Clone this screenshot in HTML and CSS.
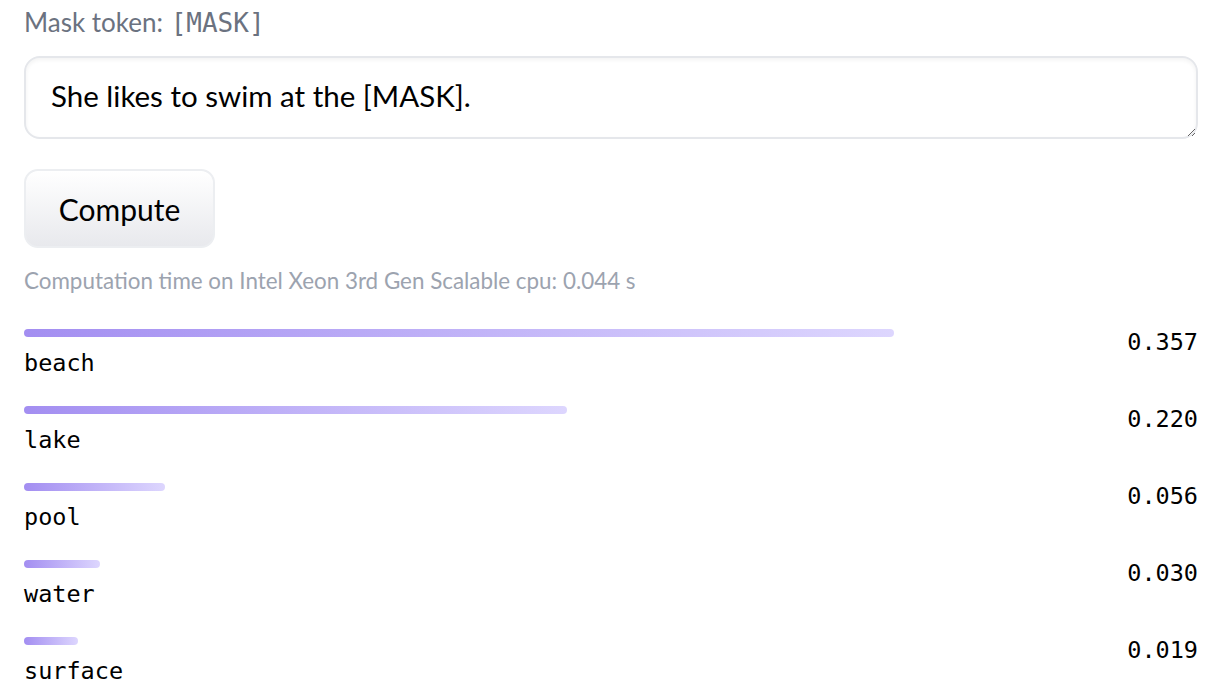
FILE: index.html
```html
<!DOCTYPE html>
<html>
<head>
<meta charset="utf-8">
<link rel="stylesheet" href="styles.css">
</head>
<body>
<div class="widget">
  <div class="mask-label">Mask token: <code class="mask-code">[MASK]</code></div>
  <textarea class="input" rows="1">She likes to swim at the [MASK].</textarea>
  <div class="actions">
    <button class="btn">Compute</button>
  </div>
  <div class="timing">Computation time on Intel Xeon 3rd Gen Scalable cpu: 0.044 s</div>
  <div class="results">
    <div class="row">
      <div class="row-main">
        <div class="bar" style="width: 870px"></div>
        <span class="token">beach</span>
      </div>
      <span class="score">0.357</span>
    </div>
    <div class="row">
      <div class="row-main">
        <div class="bar" style="width: 543px"></div>
        <span class="token">lake</span>
      </div>
      <span class="score">0.220</span>
    </div>
    <div class="row">
      <div class="row-main">
        <div class="bar" style="width: 141px"></div>
        <span class="token">pool</span>
      </div>
      <span class="score">0.056</span>
    </div>
    <div class="row">
      <div class="row-main">
        <div class="bar" style="width: 76px"></div>
        <span class="token">water</span>
      </div>
      <span class="score">0.030</span>
    </div>
    <div class="row">
      <div class="row-main">
        <div class="bar" style="width: 54px"></div>
        <span class="token">surface</span>
      </div>
      <span class="score">0.019</span>
    </div>
  </div>
</div>
</body>
</html>
```

FILE: styles.css
```css
* { box-sizing: border-box; }
html, body { margin: 0; padding: 0; background: #ffffff; }
body {
  font-family: "Lato", "Noto Sans", sans-serif;
  color: #111827;
}
.widget {
  padding: 0 18px 0 24px;
  display: flex;
  flex-direction: column;
}
.mask-label {
  font-size: 26px;
  line-height: 44px;
  color: #6b7280;
}
.mask-code {
  font-family: "DejaVu Sans Mono", monospace;
  font-size: 26px;
  color: #6b7280;
  margin-left: 1px;
}
.input {
  display: block;
  margin-top: 11px;
  width: 100%;
  height: 83px;
  padding: 18px 25px;
  font-family: "Lato", "Noto Sans", sans-serif;
  font-size: 29.5px;
  line-height: 40px;
  color: #000;
  border: 2px solid #e5e7eb;
  border-radius: 16px;
  box-shadow: inset 0 2px 4px rgba(0,0,0,0.05);
  resize: vertical;
  outline: none;
}
.actions {
  margin-top: 30px;
  display: flex;
}
.btn {
  width: 191px;
  height: 79px;
  font-family: "Lato", "Noto Sans", sans-serif;
  font-size: 30px;
  color: #000;
  background: linear-gradient(to bottom, #ffffff, #e8e9ed);
  border: 2px solid #eceef1;
  border-radius: 14px;
  padding: 0;
}
.timing {
  margin-top: 18px;
  font-size: 22.4px;
  line-height: 30px;
  color: #9ca3af;
}
.results {
  margin-top: 33px;
  display: flex;
  flex-direction: column;
  gap: 27px;
}
.row {
  display: flex;
  justify-content: space-between;
  align-items: flex-start;
}
.row-main {
  display: flex;
  flex-direction: column;
  align-items: flex-start;
}
.bar {
  height: 8px;
  border-radius: 4px;
  background: linear-gradient(to right, #a38ef1, #ddd6fe);
  margin-bottom: 10px;
}
.token, .score {
  font-family: "DejaVu Sans Mono", monospace;
  font-size: 23.5px;
  line-height: 32px;
  color: #000;
}
.score {
  margin-top: -3px;
}
```
